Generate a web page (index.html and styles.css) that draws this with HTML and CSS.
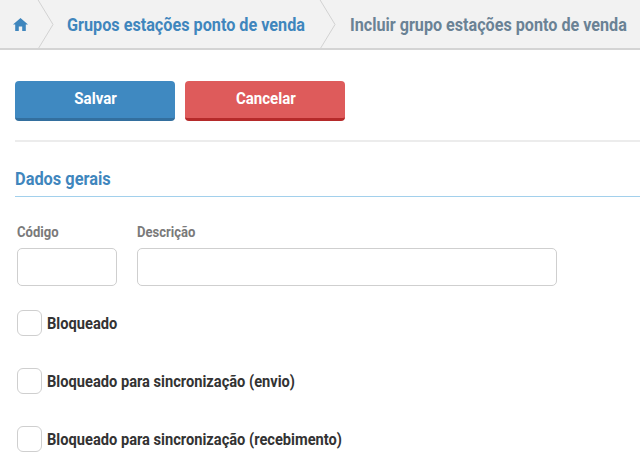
FILE: index.html
```html
<!DOCTYPE html>
<html lang="pt">
<head>
<meta charset="utf-8">
<title>Incluir grupo estações ponto de venda</title>
<link rel="stylesheet" href="styles.css">
</head>
<body>
<nav class="crumbs">
  <a class="crumb-home" href="#" aria-label="Início">
    <svg class="home-icon" viewBox="0 0 15 13" width="15" height="13"><path d="M7.5 0 L15 6.6 L12.8 6.6 L12.8 13 L9.2 13 L9.2 8.5 L5.8 8.5 L5.8 13 L2.2 13 L2.2 6.6 L0 6.6 Z"/></svg>
  </a>
  <svg class="sep" viewBox="0 0 17 49" width="17" height="49"><path d="M0.5 -1 L16 24.5 L0.5 50"/></svg>
  <a class="crumb crumb-link" href="#"><span class="squeeze">Grupos estações ponto de venda</span></a>
  <svg class="sep" viewBox="0 0 17 49" width="17" height="49"><path d="M0.5 -1 L16 24.5 L0.5 50"/></svg>
  <span class="crumb crumb-current"><span class="squeeze squeeze-tight">Incluir grupo estações ponto de venda</span></span>
</nav>
<main class="page">
  <div class="actions">
    <button class="btn btn-save" type="button"><span class="btn-text">Salvar</span></button>
    <button class="btn btn-cancel" type="button"><span class="btn-text">Cancelar</span></button>
  </div>
  <h2 class="section-title"><span class="squeeze">Dados gerais</span></h2>
  <div class="fields">
    <div class="field">
      <label class="field-label"><span class="squeeze">Código</span></label>
      <input class="input input-code" type="text">
    </div>
    <div class="field">
      <label class="field-label"><span class="squeeze">Descrição</span></label>
      <input class="input input-desc" type="text">
    </div>
  </div>
  <div class="checks">
    <label class="check"><span class="box"></span><span class="squeeze">Bloqueado</span></label>
    <label class="check"><span class="box"></span><span class="squeeze">Bloqueado para sincronização (envio)</span></label>
    <label class="check"><span class="box"></span><span class="squeeze">Bloqueado para sincronização (recebimento)</span></label>
  </div>
</main>
</body>
</html>
```
FILE: styles.css
```css
* { box-sizing: border-box; }
html, body { margin: 0; padding: 0; height: 455px; overflow: hidden; background: #fff; }
body { font-family: "Roboto", "Liberation Sans", sans-serif; }

.squeeze { display: inline-block; white-space: nowrap; transform-origin: left center; transform: scaleX(.9); }
.squeeze-tight { transform: scaleX(.897); }

.crumbs {
  display: flex;
  align-items: center;
  height: 50px;
  background: #f2f2f2;
  border-bottom: 2px solid #d4d4d4;
  overflow: hidden;
  white-space: nowrap;
  font-size: 18px;
  font-weight: 700;
}
.crumb-home { display: flex; flex: none; width: 37px; padding-left: 13px; }
.home-icon { fill: #3f86bd; display: block; }
.sep { flex: none; fill: none; stroke: #d2d2d2; stroke-width: 1; }
.crumb { text-decoration: none; display: block; flex: none; }
.crumb-link { color: #3f86bd; width: 265px; padding-left: 13px; }
.crumb-current { color: #6a8295; padding-left: 14px; }

.page { padding: 31px 0 0 15px; }
.actions {
  display: flex;
  gap: 10px;
  padding-bottom: 19px;
  border-bottom: 2px solid #ececec;
}
.btn {
  width: 160px;
  height: 40px;
  border: 0;
  border-radius: 4px;
  color: #fff;
  font: 700 16px "Roboto", "Liberation Sans", sans-serif;
  padding: 0 0 3px 2px;
}
.btn-text { display: inline-block; transform: scaleX(.94); }
.btn-save { background: #3f89c1; border-bottom: 3px solid #336f9e; }
.btn-cancel { background: #de5b5b; border-bottom: 3px solid #b52a2a; }

.section-title {
  margin: 0;
  padding-top: 22px;
  height: 55px;
  font-size: 18.2px;
  line-height: 30px;
  font-weight: 700;
  color: #3f86bd;
  border-bottom: 1px solid #a2d0ec;
}

.fields { display: flex; gap: 20px; padding: 26px 0 0 2px; }
.field { display: flex; flex-direction: column; }
.field-label { font-size: 14.5px; font-weight: 700; line-height: 19px; color: #7a7a7a; height: 25px; }
.input { height: 38px; border: 1px solid #cfcfcf; border-radius: 5px; background: #fff; padding: 0 8px; }
.input-code { width: 100px; }
.input-desc { width: 420px; }

.checks { display: flex; flex-direction: column; gap: 32px; padding: 24px 0 0 2px; }
.check { display: flex; align-items: center; gap: 5px; height: 26px; font-size: 16.3px; font-weight: 700; color: #333; }
.box { width: 25px; height: 26px; border: 1px solid #cfcfcf; border-radius: 6px; background: #fff; flex: none; }
```
